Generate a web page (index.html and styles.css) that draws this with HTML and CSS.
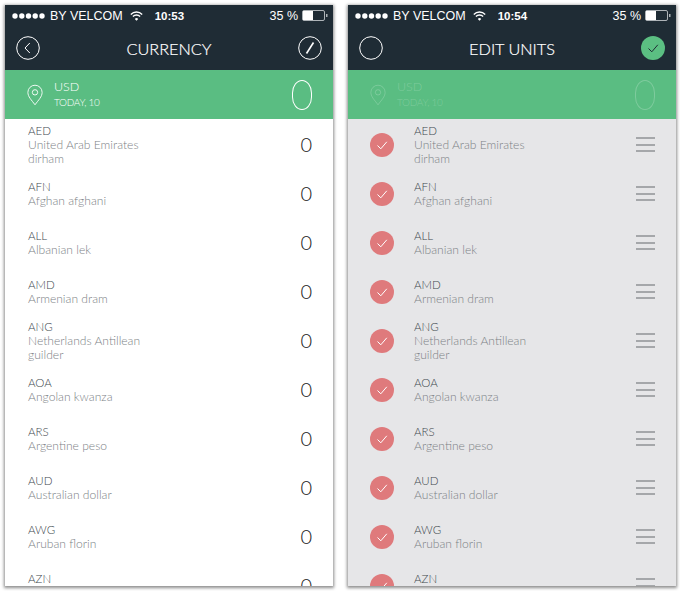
FILE: index.html
```html
<!DOCTYPE html>
<html>
<head>
    <meta charset="utf-8">
    <title>Currency</title>
    <link rel="stylesheet" href="styles.css">
</head>
<body>
<svg class="defs" width="0" height="0">
    <symbol id="dots" viewBox="0 0 33 6"><g fill="#fff"><circle cx="3" cy="3" r="2.700"/><circle cx="9.800" cy="3" r="2.700"/><circle cx="16.500" cy="3" r="2.700"/><circle cx="23.200" cy="3" r="2.700"/><circle cx="30" cy="3" r="2.700"/></g></symbol>
    <symbol id="wifi" viewBox="0 0 13 10"><g fill="none" stroke="#fff" stroke-width="1.400"><path d="M.8 3.400a8 8 0 0 1 11.400 0"/><path d="M2.900 5.600a5 5 0 0 1 7.200 0"/></g><path d="M6.500 9.800 4.800 7.900a2.400 2.400 0 0 1 3.400 0z" fill="#fff"/></symbol>
    <symbol id="battery" viewBox="0 0 26 11"><rect x=".5" y=".5" width="22" height="10" rx="1.500" fill="none" stroke="#aeb4b8"/><rect x="1" y="1" width="10" height="9" fill="#fff"/><rect x="24" y="4" width="1.500" height="3" fill="#aeb4b8"/></symbol>
    <symbol id="pin" viewBox="0 0 18 24"><g fill="none" stroke="currentColor" stroke-width="1"><path d="M9 23C5 17.500 1 14 1 9a8 8 0 0 1 16 0c0 5-4 8.500-8 14z"/><circle cx="9" cy="9" r="3"/></g></symbol>
    <symbol id="tick" viewBox="0 0 24 24"><path d="M7.500 12.500 10.800 15.800 16.800 8.800" fill="none" stroke="currentColor" stroke-width="1"/></symbol>
</svg>

<div class="phone">
    <div class="status">
        <svg class="dots"><use href="#dots"/></svg>
        <span class="carrier">BY VELCOM</span>
        <svg class="wifi"><use href="#wifi"/></svg>
        <span class="time">10:53</span>
        <span class="charge">35 %</span>
        <svg class="battery"><use href="#battery"/></svg>
    </div>
    <div class="header">
        <svg class="round-btn" viewBox="0 0 24 24"><circle cx="12" cy="12" r="11.300" fill="none" stroke="#fff"/><path d="M13.800 7 9 12l4.800 5" fill="none" stroke="#fff"/></svg>
        <div class="title">CURRENCY</div>
        <svg class="round-btn" viewBox="0 0 24 24"><circle cx="12" cy="12" r="11.300" fill="none" stroke="#fff"/><path d="M8.500 17.500 15.500 6.500" fill="none" stroke="#fff" stroke-width="1.600"/></svg>
    </div>
    <div class="base">
        <svg class="pin"><use href="#pin"/></svg>
        <div class="base-text">
            <div class="base-code">USD</div>
            <div class="base-date">TODAY, 10</div>
        </div>
        <div class="base-value"></div>
    </div>
    <div class="list">
        <div class="row"><div class="names"><div class="code">AED</div><div class="name">United Arab Emirates dirham</div></div><div class="amount">0</div></div>
        <div class="row"><div class="names"><div class="code">AFN</div><div class="name">Afghan afghani</div></div><div class="amount">0</div></div>
        <div class="row"><div class="names"><div class="code">ALL</div><div class="name">Albanian lek</div></div><div class="amount">0</div></div>
        <div class="row"><div class="names"><div class="code">AMD</div><div class="name">Armenian dram</div></div><div class="amount">0</div></div>
        <div class="row"><div class="names"><div class="code">ANG</div><div class="name">Netherlands Antillean guilder</div></div><div class="amount">0</div></div>
        <div class="row"><div class="names"><div class="code">AOA</div><div class="name">Angolan kwanza</div></div><div class="amount">0</div></div>
        <div class="row"><div class="names"><div class="code">ARS</div><div class="name">Argentine peso</div></div><div class="amount">0</div></div>
        <div class="row"><div class="names"><div class="code">AUD</div><div class="name">Australian dollar</div></div><div class="amount">0</div></div>
        <div class="row"><div class="names"><div class="code">AWG</div><div class="name">Aruban florin</div></div><div class="amount">0</div></div>
        <div class="row"><div class="names"><div class="code">AZN</div><div class="name">Azerbaijani manat</div></div><div class="amount">0</div></div>
    </div>
</div>

<div class="phone edit">
    <div class="status">
        <svg class="dots"><use href="#dots"/></svg>
        <span class="carrier">BY VELCOM</span>
        <svg class="wifi"><use href="#wifi"/></svg>
        <span class="time">10:54</span>
        <span class="charge">35 %</span>
        <svg class="battery"><use href="#battery"/></svg>
    </div>
    <div class="header">
        <svg class="round-btn" viewBox="0 0 24 24"><circle cx="12" cy="12" r="11.300" fill="none" stroke="#fff"/></svg>
        <div class="title">EDIT UNITS</div>
        <svg class="round-btn done" viewBox="0 0 24 24"><circle cx="12" cy="12" r="12" fill="#5bbf82"/><use href="#tick" width="24" height="24"/></svg>
    </div>
    <div class="base">
        <svg class="pin"><use href="#pin"/></svg>
        <div class="base-text">
            <div class="base-code">USD</div>
            <div class="base-date">TODAY, 10</div>
        </div>
        <div class="base-value"></div>
    </div>
    <div class="list">
        <div class="row"><svg class="check"><use href="#tick"/></svg><div class="names"><div class="code">AED</div><div class="name">United Arab Emirates dirham</div></div><div class="drag"><i></i><i></i><i></i></div></div>
        <div class="row"><svg class="check"><use href="#tick"/></svg><div class="names"><div class="code">AFN</div><div class="name">Afghan afghani</div></div><div class="drag"><i></i><i></i><i></i></div></div>
        <div class="row"><svg class="check"><use href="#tick"/></svg><div class="names"><div class="code">ALL</div><div class="name">Albanian lek</div></div><div class="drag"><i></i><i></i><i></i></div></div>
        <div class="row"><svg class="check"><use href="#tick"/></svg><div class="names"><div class="code">AMD</div><div class="name">Armenian dram</div></div><div class="drag"><i></i><i></i><i></i></div></div>
        <div class="row"><svg class="check"><use href="#tick"/></svg><div class="names"><div class="code">ANG</div><div class="name">Netherlands Antillean guilder</div></div><div class="drag"><i></i><i></i><i></i></div></div>
        <div class="row"><svg class="check"><use href="#tick"/></svg><div class="names"><div class="code">AOA</div><div class="name">Angolan kwanza</div></div><div class="drag"><i></i><i></i><i></i></div></div>
        <div class="row"><svg class="check"><use href="#tick"/></svg><div class="names"><div class="code">ARS</div><div class="name">Argentine peso</div></div><div class="drag"><i></i><i></i><i></i></div></div>
        <div class="row"><svg class="check"><use href="#tick"/></svg><div class="names"><div class="code">AUD</div><div class="name">Australian dollar</div></div><div class="drag"><i></i><i></i><i></i></div></div>
        <div class="row"><svg class="check"><use href="#tick"/></svg><div class="names"><div class="code">AWG</div><div class="name">Aruban florin</div></div><div class="drag"><i></i><i></i><i></i></div></div>
        <div class="row"><svg class="check"><use href="#tick"/></svg><div class="names"><div class="code">AZN</div><div class="name">Azerbaijani manat</div></div><div class="drag"><i></i><i></i><i></i></div></div>
    </div>
</div>
</body>
</html>
```

FILE: styles.css
```css
html, body {
    margin: 0;
    height: 100%;
    background: #fff;
    overflow: hidden;
}

body {
    display: flex;
    gap: 15px;
    padding: 5px;
    box-sizing: border-box;
    font-family: Lato, "Open Sans", sans-serif;
}

.defs {
    position: absolute;
}

.phone {
    width: 328px;
    height: 581px;
    flex: none;
    overflow: hidden;
    background: #fff;
    box-shadow: 0 1px 3px 1px rgba(0, 0, 0, 0.45);
}

/* status bar */
.status {
    height: 21px;
    display: flex;
    align-items: center;
    padding: 0 6px 0 7px;
    background: #1f2c35;
    color: #fff;
    font: 12.5px "Liberation Sans", Arial, sans-serif;
}

.status .dots {
    width: 33px;
    height: 6px;
}

.carrier {
    margin-left: 5px;
}

.status .wifi {
    width: 13px;
    height: 10px;
    margin-left: 7px;
}

.time {
    margin-left: 12px;
    font-size: 11.500px;
    font-weight: bold;
}

.charge {
    margin-left: auto;
}

.status .battery {
    width: 26px;
    height: 11px;
    margin-left: 4px;
    margin-right: -1px;
}

/* header */
.header {
    height: 44px;
    padding: 0 11px;
    display: flex;
    align-items: center;
    justify-content: space-between;
    background: #1f2c35;
}

.round-btn {
    width: 24px;
    height: 24px;
}

.done {
    color: #1f2c35;
}

.title {
    color: #fff;
    font-size: 16.300px;
    font-weight: 300;
    -webkit-text-stroke: 0.2px #fff;
}

/* base currency */
.base {
    height: 49px;
    display: flex;
    align-items: center;
    padding: 0 21px 0 22px;
    background: #5abd82;
    color: #fff;
}

.base .pin {
    width: 16px;
    height: 22px;
}

.base-text {
    margin-left: 11px;
}

.base-code {
    font-size: 12.500px;
    font-weight: 300;
    line-height: 16px;
}

.base-date {
    font-size: 10px;
    font-weight: 300;
    line-height: 15px;
    letter-spacing: -0.300px;
}

.base-value {
    width: 18px;
    height: 28px;
    margin-left: auto;
    border: 1px solid #fff;
    border-radius: 10px / 13px;
}

.edit .base {
    color: rgba(255, 255, 255, 0.22);
}

.edit .base-value {
    border-color: rgba(255, 255, 255, 0.22);
}

/* list */
.list {
    padding-top: 1px;
}

.row {
    height: 49px;
    display: flex;
    align-items: center;
    padding: 0 21px 0 23px;
}

.names {
    width: 125px;
}

.code {
    color: #40484e;
    font-size: 11.500px;
    font-weight: 300;
    line-height: 15px;
}

.name {
    color: #7d8286;
    font-size: 12.100px;
    font-weight: 300;
    line-height: 14px;
}

.amount {
    margin-left: auto;
    padding-bottom: 2px;
    color: #222;
    font-size: 20px;
    font-weight: 300;
}

.edit .list {
    background: #e6e6e8;
    height: 100%;
}

.edit .row {
    padding: 0 21px 0 22px;
}

.check {
    width: 24px;
    height: 24px;
    flex: none;
    margin-right: 20px;
    border-radius: 50%;
    background: #df7a7c;
    color: #fff;
}

.drag {
    width: 19px;
    margin-left: auto;
    display: flex;
    flex-direction: column;
    gap: 4.500px;
}

.drag i {
    height: 2px;
    background: #a5a7aa;
}
```
